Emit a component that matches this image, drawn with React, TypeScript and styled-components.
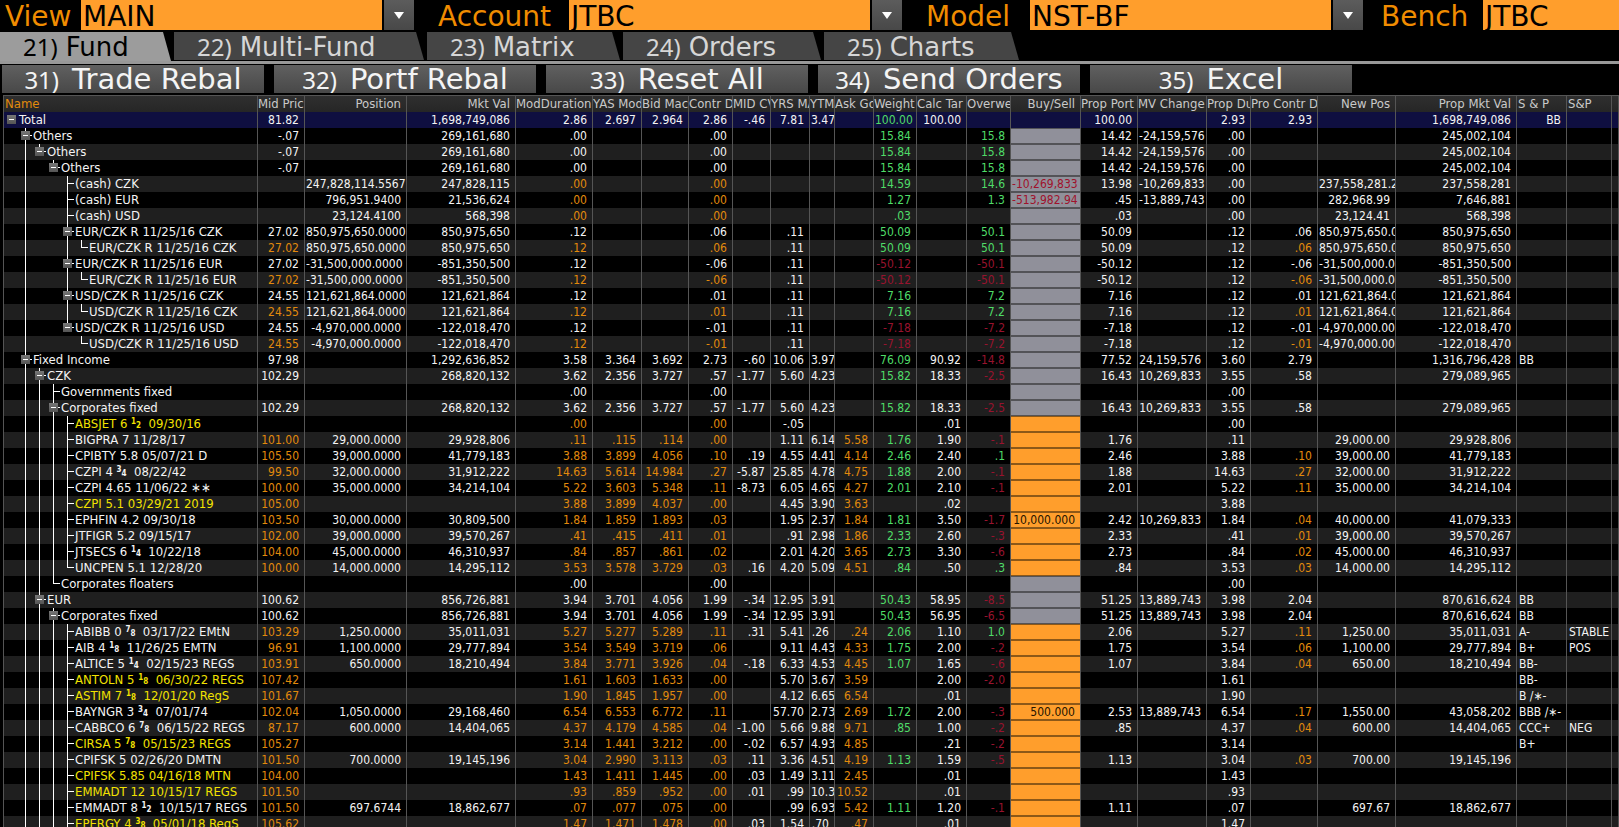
import React from "react";
import styled, { createGlobalStyle, css } from "styled-components";

const AMBER = "#ff9e2c";
const SMALL = `"DejaVu Sans Condensed", "Noto Sans", sans-serif`;
const LARGE = `"DejaVu Sans", "Noto Sans", sans-serif`;
const DIGITS = `"Noto Sans", sans-serif`;

const GlobalStyle = createGlobalStyle`
  * { box-sizing: border-box; }
  body { margin: 0; background: #000; color: #f2f2f2; }
  button, input { font: inherit; border: 0; margin: 0; padding: 0; border-radius: 0; }
`;

const Screen = styled.div`
  display: flex;
  flex-direction: column;
  height: 100vh;
  overflow: hidden;
  background: #000;
  font-family: ${LARGE};
`;

const Selectors = styled.form`
  display: flex;
  height: 30px;
  margin-bottom: 2px;
  font-size: 28px;
  line-height: 33px;
`;

const SelectorLabel = styled.label<{ $width: number; $indent: number }>`
  flex: none;
  width: ${(p) => p.$width}px;
  padding-left: ${(p) => p.$indent}px;
  color: #f08c00;
`;

const SelectorInput = styled.input<{ $grow?: boolean }>`
  flex: ${(p) => (p.$grow ? "1 0 120px" : "none")};
  width: ${(p) => (p.$grow ? "auto" : "301px")};
  min-width: 0;
  height: 30px;
  background: ${AMBER};
  color: #000;
  outline: 0;
  && {
    padding: 2px 2px 0;
  }
`;

const DropButton = styled.button`
  flex: none;
  display: flex;
  align-items: center;
  justify-content: center;
  width: 30px;
  height: 30px;
  margin-left: 2px;
  background: linear-gradient(#5c5c5c, #484848);
`;

const Tabs = styled.nav`
  display: flex;
  height: 32px;
  gap: 3px;
  border-bottom: 3px solid #989898;
`;

const Tab = styled.button<{ $width: number; $active?: boolean }>`
  display: flex;
  align-items: baseline;
  flex: none;
  gap: 8px;
  width: ${(p) => p.$width}px;
  height: ${(p) => (p.$active ? 29 : 28)}px;
  && {
    padding-left: 23px;
  }
  background: ${(p) => (p.$active ? "#9c9c9c" : "#454545")};
  color: ${(p) => (p.$active ? "#000" : "#d6d6d6")};
  clip-path: polygon(0 0, calc(100% - 8px) 0, 100% 100%, 0 100%);
  font-size: 26px;
  line-height: 30px;
  white-space: nowrap;
`;

const Shortcut = styled.span`
  font-family: ${DIGITS};
  font-size: 24px;
  line-height: 24px;
`;

const Actions = styled.div`
  display: flex;
  gap: 10px;
  padding: 1px 2px 2px;
`;

const Action = styled.button`
  display: flex;
  align-items: baseline;
  justify-content: center;
  gap: 13px;
  flex: 0 1 262px;
  height: 28px;
  background: linear-gradient(#606060, #484848);
  color: #f4f4f4;
  font-size: 29px;
  line-height: 28px;
  white-space: nowrap;
`;

const GridArea = styled.main`
  flex: 1;
  min-height: 0;
  overflow: hidden;
  padding-left: 3px;
`;

const Grid = styled.table`
  width: 100%;
  table-layout: fixed;
  border-collapse: separate;
  border-spacing: 0;
  border-left: 1px solid #555;
  font-family: ${SMALL};
  font-size: 12px;
  line-height: 16px;
`;

const edge = css`
  height: 16px;
  padding: 0;
  overflow: hidden;
  border-right: 1px solid #555;
`;

const Head = styled.th`
  ${edge}
  border-top: 1px solid #555;
  background: linear-gradient(#2f2f2f, #262626);
  color: #c9c9c9;
  font-size: 13px;
  font-weight: normal;
`;

const Row = styled.tr<{ $total: boolean }>`
  background: ${(p) => (p.$total ? "#0f0f40" : "#000")};
  &:nth-child(odd) {
    background: ${(p) => (p.$total ? "#0f0f40" : "#1f1f1f")};
  }
`;

const Cell = styled.td`
  ${edge}
`;

type Tone = "plain" | "amber" | "yellow" | "green" | "red";
const tones: Record<Tone, string> = {
  plain: "#f4f4f4",
  amber: "#e28a0c",
  yellow: "#f2e200",
  green: "#4fdc68",
  red: "#98132e",
};

const alignment = css<{ $left?: boolean }>`
  display: flex;
  justify-content: ${(p) => (p.$left ? "flex-start" : "safe flex-end")};
  padding: 0 5px 0 ${(p) => (p.$left ? 2 : 1)}px;
  overflow: hidden;
  white-space: pre;
`;

const Title = styled.div<{ $left?: boolean; $accent?: boolean }>`
  ${alignment}
  height: 16px;
  line-height: 15px;
  ${(p) => p.$accent && `color: ${tones.amber};`}
  padding-left: ${(p) => (p.$left ? 1 : 0)}px;
`;

const Value = styled.div<{ $left?: boolean; $tone: Tone }>`
  ${alignment}
  height: 16px;
  color: ${(p) => tones[p.$tone]};
`;

const NameLine = styled.div<{ $tone: Tone }>`
  display: flex;
  height: 16px;
  font-size: 13px;
  white-space: pre;
  color: ${(p) => tones[p.$tone]};
`;

type GuideKind = "none" | "through" | "end";

const Guide = styled.span<{ $kind: GuideKind; $tick: boolean }>`
  flex: none;
  display: block;
  width: 14px;
  height: 16px;
  padding: 3px 0 0 3px;
  background-repeat: no-repeat;
  background-image: linear-gradient(#fff, #fff), linear-gradient(#fff, #fff);
  background-position: 7px 0, 7px 7px;
  background-size:
    ${(p) => (p.$kind === "none" ? "0 0" : p.$kind === "through" ? "1px 16px" : "1px 8px")},
    ${(p) => (p.$tick ? "7px 1px" : "0 0")};
`;

const Toggle = styled.button`
  display: flex;
  align-items: center;
  justify-content: center;
  width: 9px;
  height: 9px;
  background: linear-gradient(#777, #555);
  &::before {
    content: "";
    width: 5px;
    height: 1px;
    background: #fff;
  }
`;

const NameText = styled.span`
  padding-left: 1px;
`;

const Fraction = styled.span`
  display: inline-flex;
  height: 16px;
  vertical-align: top;
  font-weight: bold;
  & > sup,
  & > sub {
    font-size: 8px;
    line-height: 12px;
  }
  & > sub {
    align-self: flex-end;
  }
`;

const Locked = styled.div`
  height: 16px;
  border: solid #535357;
  border-width: 1px 0;
  padding: 0 5px 0 1px;
  display: flex;
  justify-content: safe flex-end;
  overflow: hidden;
  background: #90909a;
  color: #a0122c;
  line-height: 14px;
`;

const OrderInput = styled.input`
  display: block;
  width: 100%;
  height: 16px;
  && {
    border: solid #8c5818;
    border-width: 1px 0;
    padding: 0 5px 0 1px;
  }
  background: ${AMBER};
  color: #241400;
  text-align: right;
  line-height: 14px;
  outline: 0;
`;

type Column = { title: string; width?: number; left?: boolean };

const columns: Column[] = [
  { title: "Name", width: 254, left: true },
  { title: "Mid Pric", width: 47 },
  { title: "Position", width: 102 },
  { title: "Mkt Val", width: 109 },
  { title: "ModDuration", width: 77 },
  { title: "YAS Mod", width: 49 },
  { title: "Bid Mac", width: 47 },
  { title: "Contr D", width: 44 },
  { title: "MID CV", width: 38 },
  { title: "YRS MA", width: 39 },
  { title: "YTM", width: 25 },
  { title: "Ask Go", width: 39 },
  { title: "Weight", width: 43 },
  { title: "Calc Tar", width: 50 },
  { title: "Overwe", width: 44 },
  { title: "Buy/Sell", width: 70 },
  { title: "Prop Port", width: 57 },
  { title: "MV Change", width: 69 },
  { title: "Prop Du", width: 44 },
  { title: "Pro Contr D", width: 67 },
  { title: "New Pos", width: 78 },
  { title: "Prop Mkt Val", width: 121 },
  { title: "S & P", width: 50, left: true },
  { title: "S&P", width: 45, left: true },
  { title: "" },
];

type Kind = "total" | "node" | "group" | "cash" | "bond" | "watch";
type Holding = [level: number, kind: Kind, name: string, figures: string];

const holdings: Holding[] = [
  [0, "total", "Total", "81.82||1,698,749,086|2.86|2.697|2.964|2.86|-.46|7.81|3.47||100.00|100.00|||100.00||2.93|2.93||1,698,749,086|BB"],
  [1, "node", "Others", "-.07||269,161,680|.00|||.00|||||15.84||15.8||14.42|-24,159,576|.00|||245,002,104"],
  [2, "node", "Others", "-.07||269,161,680|.00|||.00|||||15.84||15.8||14.42|-24,159,576|.00|||245,002,104"],
  [3, "node", "Others", "-.07||269,161,680|.00|||.00|||||15.84||15.8||14.42|-24,159,576|.00|||245,002,104"],
  [4, "cash", "(cash) CZK", "|247,828,114.5567|247,828,115|.00|||.00|||||14.59||14.6|-10,269,833|13.98|-10,269,833|.00||237,558,281.22|237,558,281"],
  [4, "cash", "(cash) EUR", "|796,951.9400|21,536,624|.00|||.00|||||1.27||1.3|-513,982.94|.45|-13,889,743|.00||282,968.99|7,646,881"],
  [4, "cash", "(cash) USD", "|23,124.4100|568,398|.00|||.00|||||.03||||.03||.00||23,124.41|568,398"],
  [4, "node", "EUR/CZK R 11/25/16 CZK", "27.02|850,975,650.0000|850,975,650|.12|||.06||.11|||50.09||50.1||50.09||.12|.06|850,975,650.00|850,975,650"],
  [5, "cash", "EUR/CZK R 11/25/16 CZK", "27.02|850,975,650.0000|850,975,650|.12|||.06||.11|||50.09||50.1||50.09||.12|.06|850,975,650.00|850,975,650"],
  [4, "node", "EUR/CZK R 11/25/16 EUR", "27.02|-31,500,000.0000|-851,350,500|.12|||-.06||.11|||-50.12||-50.1||-50.12||.12|-.06|-31,500,000.00|-851,350,500"],
  [5, "cash", "EUR/CZK R 11/25/16 EUR", "27.02|-31,500,000.0000|-851,350,500|.12|||-.06||.11|||-50.12||-50.1||-50.12||.12|-.06|-31,500,000.00|-851,350,500"],
  [4, "node", "USD/CZK R 11/25/16 CZK", "24.55|121,621,864.0000|121,621,864|.12|||.01||.11|||7.16||7.2||7.16||.12|.01|121,621,864.00|121,621,864"],
  [5, "cash", "USD/CZK R 11/25/16 CZK", "24.55|121,621,864.0000|121,621,864|.12|||.01||.11|||7.16||7.2||7.16||.12|.01|121,621,864.00|121,621,864"],
  [4, "node", "USD/CZK R 11/25/16 USD", "24.55|-4,970,000.0000|-122,018,470|.12|||-.01||.11|||-7.18||-7.2||-7.18||.12|-.01|-4,970,000.00|-122,018,470"],
  [5, "cash", "USD/CZK R 11/25/16 USD", "24.55|-4,970,000.0000|-122,018,470|.12|||-.01||.11|||-7.18||-7.2||-7.18||.12|-.01|-4,970,000.00|-122,018,470"],
  [1, "node", "Fixed Income", "97.98||1,292,636,852|3.58|3.364|3.692|2.73|-.60|10.06|3.97||76.09|90.92|-14.8||77.52|24,159,576|3.60|2.79||1,316,796,428|BB"],
  [2, "node", "CZK", "102.29||268,820,132|3.62|2.356|3.727|.57|-1.77|5.60|4.23||15.82|18.33|-2.5||16.43|10,269,833|3.55|.58||279,089,965"],
  [3, "group", "Governments fixed", "|||.00|||.00|||||||||||.00"],
  [3, "node", "Corporates fixed", "102.29||268,820,132|3.62|2.356|3.727|.57|-1.77|5.60|4.23||15.82|18.33|-2.5||16.43|10,269,833|3.55|.58||279,089,965"],
  [4, "watch", "ABSJET 6 {1/2}  09/30/16", "|||.00|||.00||-.05||||.01|||||.00"],
  [4, "bond", "BIGPRA 7 11/28/17", "101.00|29,000.0000|29,928,806|.11|.115|.114|.00||1.11|6.14|5.58|1.76|1.90|-.1||1.76||.11||29,000.00|29,928,806"],
  [4, "bond", "CPIBTY 5.8 05/07/21 D", "105.50|39,000.0000|41,779,183|3.88|3.899|4.056|.10|.19|4.55|4.41|4.14|2.46|2.40|.1||2.46||3.88|.10|39,000.00|41,779,183"],
  [4, "bond", "CZPI 4 {3/4}  08/22/42", "99.50|32,000.0000|31,912,222|14.63|5.614|14.984|.27|-5.87|25.85|4.78|4.75|1.88|2.00|-.1||1.88||14.63|.27|32,000.00|31,912,222"],
  [4, "bond", "CZPI 4.65 11/06/22 ∗∗", "100.00|35,000.0000|34,214,104|5.22|3.603|5.348|.11|-8.73|6.05|4.65|4.27|2.01|2.10|-.1||2.01||5.22|.11|35,000.00|34,214,104"],
  [4, "watch", "CZPI 5.1 03/29/21 2019", "105.00|||3.88|3.899|4.037|.00||4.45|3.90|3.63||.02|||||3.88"],
  [4, "bond", "EPHFIN 4.2 09/30/18", "103.50|30,000.0000|30,809,500|1.84|1.859|1.893|.03||1.95|2.37|1.84|1.81|3.50|-1.7|10,000.000|2.42|10,269,833|1.84|.04|40,000.00|41,079,333"],
  [4, "bond", "JTFIGR 5.2 09/15/17", "102.00|39,000.0000|39,570,267|.41|.415|.411|.01||.91|2.98|1.86|2.33|2.60|-.3||2.33||.41|.01|39,000.00|39,570,267"],
  [4, "bond", "JTSECS 6 {1/4}  10/22/18", "104.00|45,000.0000|46,310,937|.84|.857|.861|.02||2.01|4.20|3.65|2.73|3.30|-.6||2.73||.84|.02|45,000.00|46,310,937"],
  [4, "bond", "UNCPEN 5.1 12/28/20", "100.00|14,000.0000|14,295,112|3.53|3.578|3.729|.03|.16|4.20|5.09|4.51|.84|.50|.3||.84||3.53|.03|14,000.00|14,295,112"],
  [3, "group", "Corporates floaters", "|||.00|||.00|||||||||||.00"],
  [2, "node", "EUR", "100.62||856,726,881|3.94|3.701|4.056|1.99|-.34|12.95|3.91||50.43|58.95|-8.5||51.25|13,889,743|3.98|2.04||870,616,624|BB"],
  [3, "node", "Corporates fixed", "100.62||856,726,881|3.94|3.701|4.056|1.99|-.34|12.95|3.91||50.43|56.95|-6.5||51.25|13,889,743|3.98|2.04||870,616,624|BB"],
  [4, "bond", "ABIBB 0 {7/8}  03/17/22 EMtN", "103.29|1,250.0000|35,011,031|5.27|5.277|5.289|.11|.31|5.41|.26|.24|2.06|1.10|1.0||2.06||5.27|.11|1,250.00|35,011,031|A-|STABLE"],
  [4, "bond", "AIB 4 {1/8}  11/26/25 EMTN", "96.91|1,100.0000|29,777,894|3.54|3.549|3.719|.06||9.11|4.43|4.33|1.75|2.00|-.2||1.75||3.54|.06|1,100.00|29,777,894|B+|POS"],
  [4, "bond", "ALTICE 5 {1/4}  02/15/23 REGS", "103.91|650.0000|18,210,494|3.84|3.771|3.926|.04|-.18|6.33|4.53|4.45|1.07|1.65|-.6||1.07||3.84|.04|650.00|18,210,494|BB-"],
  [4, "watch", "ANTOLN 5 {1/8}  06/30/22 REGS", "107.42|||1.61|1.603|1.633|.00||5.70|3.67|3.59||2.00|-2.0||||1.61||||BB-"],
  [4, "watch", "ASTIM 7 {1/8}  12/01/20 RegS", "101.67|||1.90|1.845|1.957|.00||4.12|6.65|6.54||.01|||||1.90||||B /∗-"],
  [4, "bond", "BAYNGR 3 {3/4}  07/01/74", "102.04|1,050.0000|29,168,460|6.54|6.553|6.772|.11||57.70|2.73|2.69|1.72|2.00|-.3|500.000|2.53|13,889,743|6.54|.17|1,550.00|43,058,202|BBB /∗-"],
  [4, "bond", "CABBCO 6 {7/8}  06/15/22 REGS", "87.17|600.0000|14,404,065|4.37|4.179|4.585|.04|-1.00|5.66|9.88|9.71|.85|1.00|-.2||.85||4.37|.04|600.00|14,404,065|CCC+|NEG"],
  [4, "watch", "CIRSA 5 {7/8}  05/15/23 REGS", "105.27|||3.14|1.441|3.212|.00|-.02|6.57|4.93|4.85||.21|-.2||||3.14||||B+"],
  [4, "bond", "CPIFSK 5 02/26/20 DMTN", "101.50|700.0000|19,145,196|3.04|2.990|3.113|.03|.11|3.36|4.51|4.19|1.13|1.59|-.5||1.13||3.04|.03|700.00|19,145,196"],
  [4, "watch", "CPIFSK 5.85 04/16/18 MTN", "104.00|||1.43|1.411|1.445|.00|.03|1.49|3.11|2.45||.01|||||1.43"],
  [4, "watch", "EMMADT 12 10/15/17 REGS", "101.50|||.93|.859|.952|.00|.01|.99|10.3|10.52||.01|||||.93"],
  [4, "bond", "EMMADT 8 {1/2}  10/15/17 REGS", "101.50|697.6744|18,862,677|.07|.077|.075|.00||.99|6.93|5.42|1.11|1.20|-.1||1.11||.07||697.67|18,862,677"],
  [4, "watch", "EPERGY 4 {3/8}  05/01/18 RegS", "105.62|||1.47|1.471|1.478|.00|.03|1.54|.70|.47||.01|||||1.47"],
];

const MID = 0;
const ASK = 10;
const WEIGHT = 11;
const OVER = 13;
const BUY = 14;
const CONTR_PROP = 18;
const RATING = 21;
const COMPUTED = [MID, 3, 4, 5, 6, CONTR_PROP];

/* A guide runs on when another row of the same level follows under the same parent. */
function guideFor(index: number, level: number): GuideKind {
  if (level === 0) return "none";
  for (let i = index + 1; i < holdings.length; i++) {
    if (holdings[i][0] < level) return level === holdings[index][0] ? "end" : "none";
    if (holdings[i][0] === level) return "through";
  }
  return "through";
}

function toneFor(column: number, kind: Kind, value: string): Tone {
  if (column === ASK) return "amber";
  if (column === WEIGHT || column === OVER) return value.startsWith("-") ? "red" : "green";
  const security = kind === "cash" || kind === "bond" || kind === "watch";
  return security && COMPUTED.includes(column) ? "amber" : "plain";
}

function NameLabel({ text }: { text: string }) {
  const match = text.match(/^(.*)\{(\d)\/(\d)\}(.*)$/);
  if (!match) return <NameText>{text}</NameText>;
  return (
    <NameText>
      {match[1]}
      <Fraction>
        <sup>{match[2]}</sup>
        <sub>{match[3]}</sub>
      </Fraction>
      {match[4]}
    </NameText>
  );
}

function NameCell({ index }: { index: number }) {
  const [level, kind, name] = holdings[index];
  const expandable = kind === "total" || kind === "node";
  return (
    <Cell>
      <NameLine $tone={kind === "watch" ? "yellow" : "plain"}>
        {Array.from({ length: level + 1 }, (_, l) => (
          <Guide key={l} $kind={guideFor(index, l)} $tick={l === level && level > 0}>
            {l === level && expandable && <Toggle type="button" aria-label={`Collapse ${name}`} />}
          </Guide>
        ))}
        <NameLabel text={name} />
      </NameLine>
    </Cell>
  );
}

function FigureCell({ column, kind, name, value }: { column: number; kind: Kind; name: string; value: string }) {
  if (column === BUY && kind !== "total") {
    return (
      <Cell>
        {kind === "bond" || kind === "watch" ? (
          <OrderInput aria-label={`Buy/Sell ${name.replace(/[{}]/g, "")}`} defaultValue={value} />
        ) : (
          <Locked>{value}</Locked>
        )}
      </Cell>
    );
  }
  return (
    <Cell>
      <Value $left={column >= RATING && kind !== "total"} $tone={toneFor(column, kind, value)}>
        {value}
      </Value>
    </Cell>
  );
}

function Arrow() {
  return (
    <svg width="10" height="7" viewBox="0 0 10 7" aria-hidden="true">
      <path d="M0 0H10L5 7Z" fill="#fff" />
    </svg>
  );
}

const selectors = [
  { label: "View", value: "MAIN", width: 81, indent: 5 },
  { label: "Account", value: "JTBC", width: 155, indent: 24 },
  { label: "Model", value: "NST-BF", width: 128, indent: 24 },
  { label: "Bench", value: "JTBC", width: 120, indent: 18 },
];

const tabs = [
  { key: "21)", label: "Fund", width: 171 },
  { key: "22)", label: "Multi-Fund", width: 250 },
  { key: "23)", label: "Matrix", width: 193 },
  { key: "24)", label: "Orders", width: 198 },
  { key: "25)", label: "Charts", width: 195 },
];

const actions = [
  ["31)", "Trade Rebal"],
  ["32)", "Portf Rebal"],
  ["33)", "Reset All"],
  ["34)", "Send Orders"],
  ["35)", "Excel"],
];

export default function App() {
  return (
    <Screen>
      <GlobalStyle />
      <Selectors>
        {selectors.map((s, i) => {
          const last = i === selectors.length - 1;
          return (
            <React.Fragment key={s.label}>
              <SelectorLabel htmlFor={s.label} $width={s.width} $indent={s.indent}>
                {s.label}
              </SelectorLabel>
              <SelectorInput id={s.label} defaultValue={s.value} $grow={last} />
              {!last && (
                <DropButton type="button" aria-label={`Choose ${s.label}`}>
                  <Arrow />
                </DropButton>
              )}
            </React.Fragment>
          );
        })}
      </Selectors>
      <Tabs>
        {tabs.map((t, i) => (
          <Tab key={t.key} type="button" $width={t.width} $active={i === 0}>
            <Shortcut>{t.key}</Shortcut>
            {t.label}
          </Tab>
        ))}
      </Tabs>
      <Actions>
        {actions.map(([key, label]) => (
          <Action key={key} type="button">
            <Shortcut>{key}</Shortcut>
            {label}
          </Action>
        ))}
      </Actions>
      <GridArea>
        <Grid>
          <colgroup>
            {columns.map((c, i) => (
              <col key={i} width={c.width} />
            ))}
          </colgroup>
          <thead>
            <tr>
              {columns.map((c, i) => (
                <Head key={i} scope="col">
                  <Title $left={c.left} $accent={i === 0}>{c.title}</Title>
                </Head>
              ))}
            </tr>
          </thead>
          <tbody>
            {holdings.map(([, kind, name, figures], index) => {
              const values = figures.split("|");
              return (
                <Row key={index} $total={kind === "total"}>
                  <NameCell index={index} />
                  {columns.slice(1).map((_, c) => (
                    <FigureCell key={c} column={c} kind={kind} name={name} value={values[c] ?? ""} />
                  ))}
                </Row>
              );
            })}
          </tbody>
        </Grid>
      </GridArea>
    </Screen>
  );
}
